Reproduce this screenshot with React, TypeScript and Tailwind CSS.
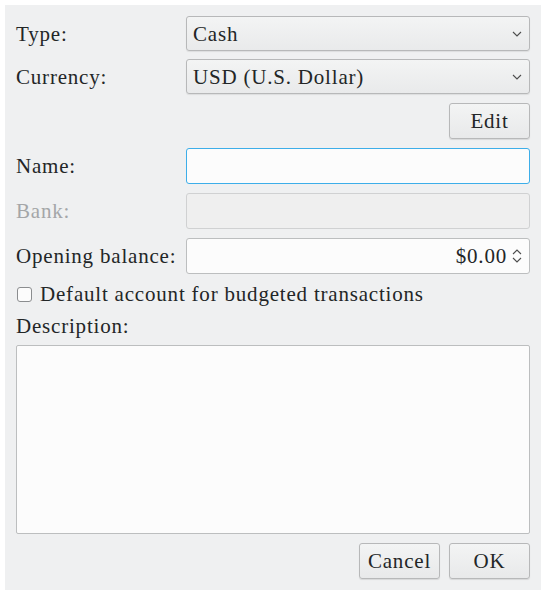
import React from "react";

const Chevron = () => (
    <svg width="10" height="6" viewBox="0 0 10 6" className="shrink-0">
        <path d="M1 1l4 4 4-4" fill="none" stroke="#4d4d4d" strokeWidth="1.1"/>
    </svg>
);

const Spin = () => (
    <svg width="10" height="18" viewBox="0 0 10 18" className="shrink-0">
        <path d="M1 7l4-4 4 4M1 11l4 4 4-4" fill="none" stroke="#4d4d4d" strokeWidth="1.1"/>
    </svg>
);

const Select = (props: { value: string }) => (
    <div
        className="flex-1 h-[35px] flex items-center justify-between pl-[6px] pr-[7px] rounded-[3px] border border-[#b7b8b9] bg-gradient-to-b from-[#f3f4f4] to-[#e9eaeb] shadow-[0_1px_1px_rgba(0,0,0,0.08)]">
        <span>{props.value}</span>
        <Chevron/>
    </div>
);

const Button = (props: { label: string, width: string }) => (
    <div
        className={`${props.width} h-[36px] flex items-center justify-center rounded-[3px] border border-[#b7b8b9] bg-gradient-to-b from-[#f3f4f4] to-[#e8e9ea] shadow-[0_1px_1px_rgba(0,0,0,0.1)]`}>
        {props.label}
    </div>
);

const Row = (props: { label: string, disabled?: boolean, children: React.ReactNode, className?: string }) => (
    <div className={`flex items-center ${props.className || ""}`}>
        <div className={`w-[170px] shrink-0 ${props.disabled ? "text-[#a4a6a8]" : ""}`}>{props.label}</div>
        {props.children}
    </div>
);

export default function App() {
    return (
        <div className="w-[551px] h-[599px] bg-white p-[5px]">
            <div
                className="w-[536px] h-[585px] bg-[#eff0f1] px-[11px] pt-[11px] flex flex-col [font-family:Liberation_Serif,Times_New_Roman,serif] text-[21px] leading-[26px] tracking-[0.8px] text-[#232627]">
                <Row label="Type:">
                    <Select value="Cash"/>
                </Row>
                <Row label="Currency:" className="mt-[8px]">
                    <Select value="USD (U.S. Dollar)"/>
                </Row>
                <div className="flex justify-end mt-[9px]">
                    <Button label="Edit" width="w-[81px]"/>
                </div>
                <Row label="Name:" className="mt-[9px]">
                    <div className="flex-1 h-[36px] rounded-[3px] border border-[#3daee9] bg-[#fcfcfc]"/>
                </Row>
                <Row label="Bank:" disabled className="mt-[9px]">
                    <div className="flex-1 h-[36px] rounded-[3px] border border-[#d0d1d2] bg-[#efefef]"/>
                </Row>
                <Row label="Opening balance:" className="mt-[9px]">
                    <div
                        className="flex-1 h-[36px] rounded-[3px] border border-[#bcbebf] bg-[#fcfcfc] flex items-center justify-end gap-[5px] pr-[7px]">
                        <span>$0.00</span>
                        <Spin/>
                    </div>
                </Row>
                <div className="flex items-center h-[26px] mt-[7px]">
                    <div className="w-[15px] h-[15px] ml-[1px] mr-[8px] rounded-[3px] border border-[#8b8d8f] bg-[#fcfcfc]"/>
                    <span>Default account for budgeted transactions</span>
                </div>
                <div className="h-[26px] mt-[6px] flex items-center">Description:</div>
                <div className="mt-[6px] h-[189px] rounded-[2px] border border-[#bcbebf] bg-[#fcfcfc]"/>
                <div className="flex justify-end gap-[9px] mt-[9px]">
                    <Button label="Cancel" width="w-[81px]"/>
                    <Button label="OK" width="w-[81px]"/>
                </div>
            </div>
        </div>
    );
}
